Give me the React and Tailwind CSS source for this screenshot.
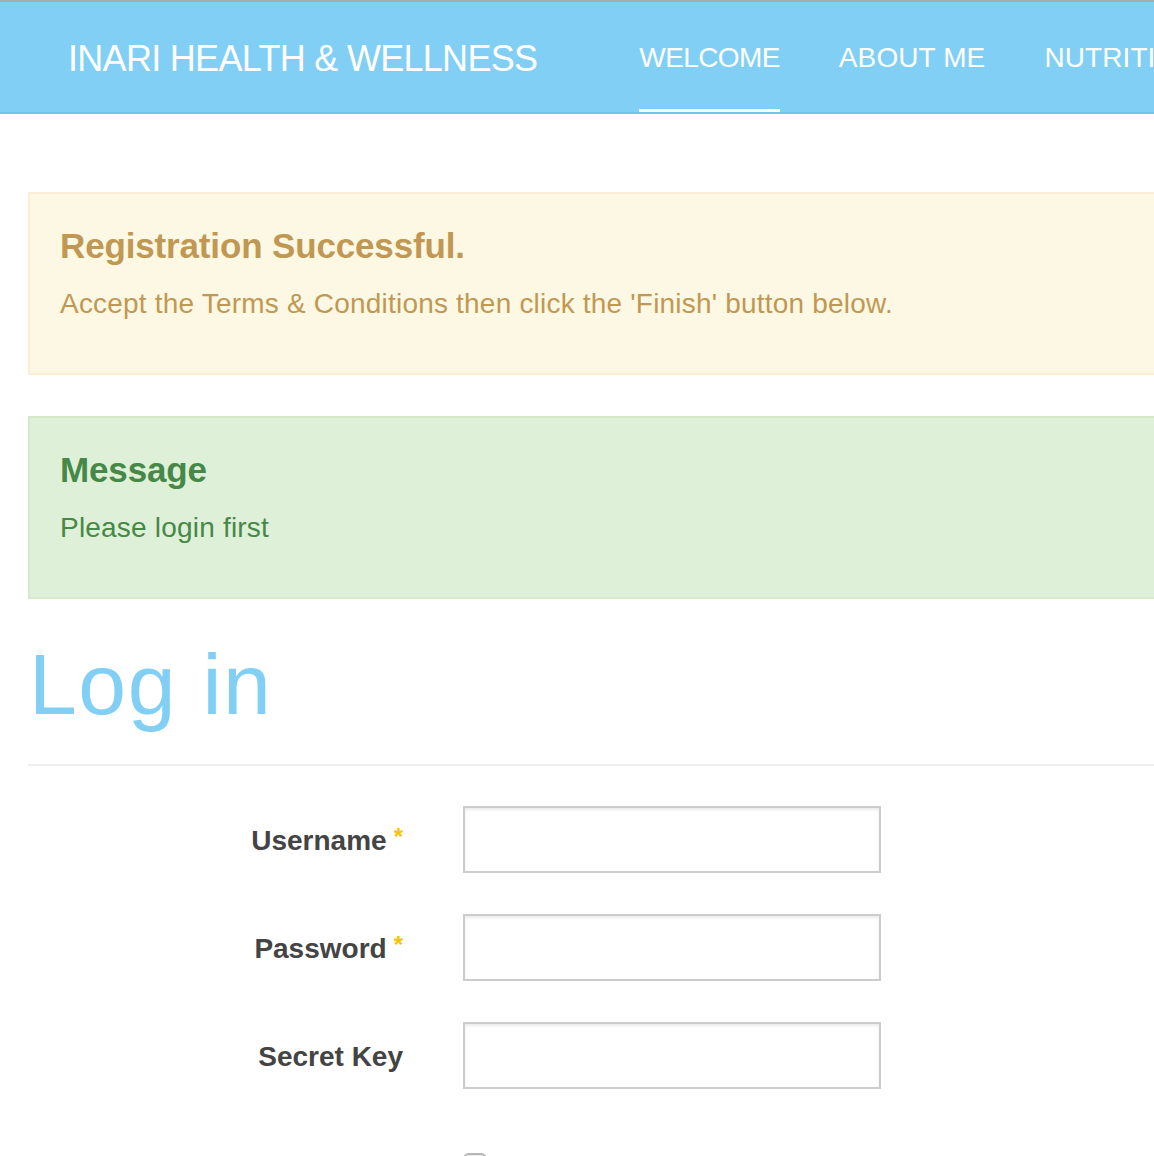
import React from 'react';

const navItems = ['WELCOME', 'ABOUT ME', 'NUTRITION', 'FITNESS', 'CONTACT'];

function Alert({tone, title, children}) {
    const styles = {
        warning: 'bg-[#fcf8e3] border-[#fbeed5] text-[#c09853]',
        success: 'bg-[#dff0d8] border-[#d6e9c6] text-[#468847]',
    };
    return (
        <div className={`border-2 pl-[30px] pb-[49px] ${styles[tone]}`}>
            <h4 className="text-[35px] leading-[40px] font-bold tracking-[-0.15px] pt-[32px]">{title}</h4>
            <p className="text-[28px] leading-[40px] mt-[18px] tracking-[0.2px]">{children}</p>
        </div>
    );
}

function Field({label, required, type = 'text'}) {
    return (
        <div className="flex items-center">
            <label className="w-[375px] text-right text-[28px] leading-[40px] font-bold text-[#444] pt-[3px]">
                {label}
                {required && <span className="text-[#f5c400] text-[24px] align-top ml-[7px] relative top-[-4px]">*</span>}
            </label>
            <input
                type={type}
                className="ml-[60px] w-[418px] h-[67px] border-2 border-[#cccccc] bg-white shadow-[inset_0_2px_3px_rgba(0,0,0,0.08)] focus:outline-none"
            />
        </div>
    );
}

export default function App() {
    return (
        <div className="w-[1154px] h-[1156px] overflow-hidden bg-white font-['Liberation_Sans',Arial,sans-serif]">
            <header className="w-[1400px] border-t-2 border-[#aaaaaa] bg-[#81cff4] border-b-2 border-b-[#6ec6f0] h-[114px] flex items-stretch text-white whitespace-nowrap">
                <div className="pl-[68px] flex items-center pt-[3px] text-[36px] leading-[40px] tracking-[-0.7px]">
                    INARI HEALTH &amp; WELLNESS
                </div>
                <nav className="flex ml-[102px] gap-[59px]">
                    {navItems.map((item, i) => (
                        <a
                            key={item}
                            className={`flex items-center pt-[5px] text-[28px] leading-[40px] border-b-[3px] ${i === 0 ? 'border-white tracking-[-0.6px]' : 'border-transparent tracking-[0.1px]'}`}
                        >
                            {item}
                        </a>
                    ))}
                </nav>
            </header>

            <main className="w-[1400px] pl-[28px]">
                <div className="mt-[78px] flex flex-col gap-[41px]">
                    <Alert tone="warning" title="Registration Successful.">
                        Accept the Terms &amp; Conditions then click the 'Finish' button below.
                    </Alert>
                    <Alert tone="success" title="Message">
                        Please login first
                    </Alert>
                </div>

                <h1 className="mt-[35px] pl-[1px] text-[86px] leading-[100px] text-[#81cff4] tracking-[1.5px]">Log in</h1>
                <hr className="mt-[30px] border-0 h-[2px] bg-[#eeeeee]"/>

                <form className="mt-[40px] flex flex-col gap-[41px]">
                    <Field label="Username" required/>
                    <Field label="Password" required type="password"/>
                    <Field label="Secret Key"/>
                    <div className="flex items-start ml-[435px] mt-[23px] gap-[16px]">
                        <span className="w-[24px] h-[24px] rounded-[6px] border-2 border-[#b5b5b5] bg-white shadow-[inset_0_1px_2px_rgba(0,0,0,0.1)]"/>
                        <span className="text-[28px] leading-[40px] font-bold text-[#444] -mt-[6px]">Remember me</span>
                    </div>
                </form>
            </main>
        </div>
    );
}
